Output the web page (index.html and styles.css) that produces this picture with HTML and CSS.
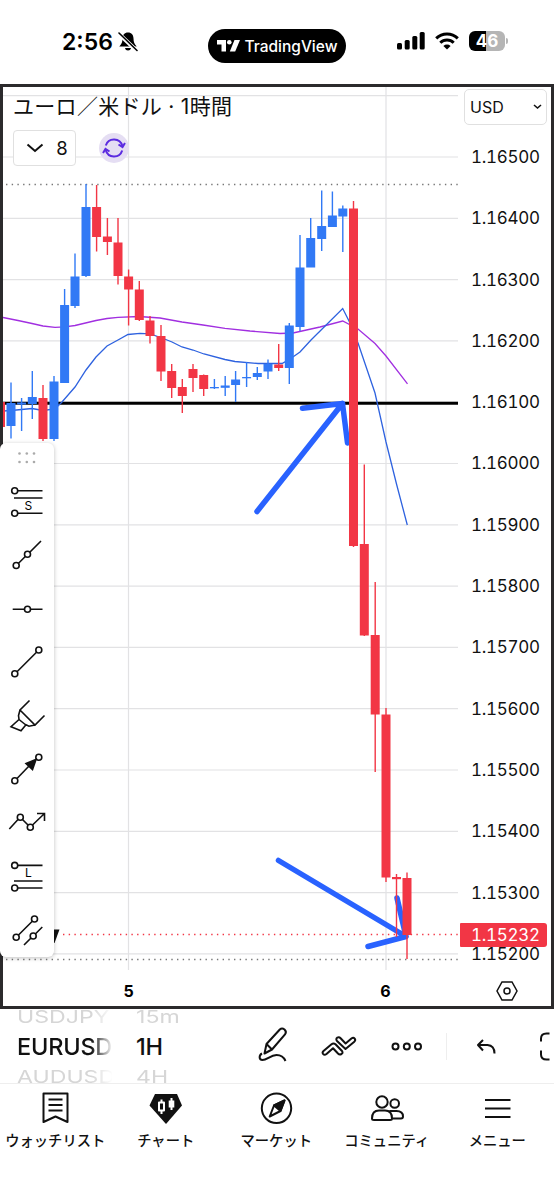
FILE: index.html
```html
<!DOCTYPE html>
<html lang="ja">
<head>
    <meta charset="utf-8">
    <title>EURUSD 1H</title>
    <link rel="stylesheet" href="styles.css">
</head>
<body>
    <header class="status">
        <div class="clock">
            <span>2:56</span>
            <svg width="20" height="22" viewBox="0 0 20 22">
                <path d="M10 1.500c-3.600 0-5.500 2.600-5.500 6 0 4-1 5.500-3.200 8h17.400c-2.200-2.500-3.200-4-3.200-8 0-3.400-1.900-6-5.500-6zM7 17h6c-.3 1.700-1.500 2.500-3 2.500s-2.700-.8-3-2.500z"/>
                <path d="M0 2l19 18" stroke="#fff" stroke-width="4"/>
                <path d="M1 2l18 17.500" stroke="#000" stroke-width="1.600" stroke-linecap="round"/>
            </svg>
        </div>
        <div class="island">
            <svg width="23" height="12" viewBox="0 0 23 12" fill="#fff">
                <path d="M0 0h9v11.500H4.500V4.500H0z"/>
                <circle cx="12.300" cy="2.300" r="2.300"/>
                <path d="M17.500 0H23l-4.800 11.500h-5.400z"/>
            </svg>
            <span>TradingView</span>
        </div>
        <div class="signals">
            <svg width="28" height="18" viewBox="0 0 28 18">
                <rect x="0" y="11" width="5" height="6.500" rx="1.500"/>
                <rect x="7.700" y="8" width="5" height="9.500" rx="1.500"/>
                <rect x="15.300" y="4" width="5" height="13.500" rx="1.500"/>
                <rect x="22.700" y="0" width="5" height="17.500" rx="1.500"/>
            </svg>
            <svg width="24" height="18" viewBox="0 0 24 18" fill="none" stroke="#000" stroke-width="3">
                <path d="M1.200 6.300a15.600 15.600 0 0 1 21.600 0M5.300 10.700a9.600 9.600 0 0 1 13.400 0"/>
                <path d="M12 17.500l-3.600-3.600a5.200 5.200 0 0 1 7.200 0z" fill="#000" stroke="none"/>
            </svg>
            <div class="power">
                <div class="battery">46</div>
                <i></i>
            </div>
        </div>
    </header>

    <main class="chart">
        <svg class="plot" id="plot" width="457" height="918" viewBox="3 87 457 918">
            <g id="grid" class="grid"></g>
            <path class="dots" d="M6 184.500H458M6 959.500H458"/>
            <path class="dots dots-red" d="M63 934.500H458"/>
            <path class="level" d="M3 403.300H458"/>
            <polyline class="ma slow" points="3,317.500 18,320.500 32,323.500 43,326 55,327.300 65,326.800 75,325.500 96,320.500 107,318.500 118,317.300 139,316.500 160,318 182,322 203,325 225,328.300 250,331 280,333.500 293,333 320,327 342.700,321 358,329 375,343.500 386,356 407.500,383.800"/>
            <polyline class="ma fast" points="3,411 11,410.500 32,408.500 43,410.500 55,409 62,402 75,387 86,370 96,357 107,346 118,340 128,334.500 140,333.300 150,333.800 162,338 172,342 182,347 193,350 204,354 225,359.500 235,361.500 258,363.500 282,363.500 290,359 300,352 311,340 342.700,308.500 349,321 358,343 375,393 386,442 396.500,484 407.300,525"/>
            <path class="arrow" d="M257 511.500L342.500 403.500M302.500 408.300L342.500 403.500L347.500 443"/>
            <path class="arrow" d="M278.500 860.500L406 936.500M368 946.500L406 936.500L397 898"/>
            <g id="candles"></g>
            <path d="M48 929.500h11.500l-5 13.500h-6z" fill="#111"/>
            <text class="day" x="128.500" y="997">5</text>
            <text class="day" x="385.500" y="997">6</text>
        </svg>

        <aside class="axis">
            <button class="currency">USD
                <svg width="9" height="6" viewBox="0 0 9 6"><path d="M1 1l3.500 3L8 1" fill="none" stroke="#111" stroke-width="1.600"/></svg>
            </button>
            <ul class="prices">
                <li>1.16500</li>
                <li>1.16400</li>
                <li>1.16300</li>
                <li>1.16200</li>
                <li>1.16100</li>
                <li>1.16000</li>
                <li>1.15900</li>
                <li>1.15800</li>
                <li>1.15700</li>
                <li>1.15600</li>
                <li>1.15500</li>
                <li>1.15400</li>
                <li>1.15300</li>
                <li>1.15200</li>
            </ul>
            <svg class="gear" width="22" height="20" viewBox="0 0 22 20" fill="none" stroke="#111" stroke-width="1.500">
                <path d="M6 1h10l5 9-5 9H6l-5-9z"/>
                <circle cx="11" cy="10" r="3"/>
            </svg>
            <div class="last">1.15232</div>
        </aside>

        <div class="legend">
            <h1>ユーロ／米ドル · 1時間</h1>
            <div class="legend-row">
                <button class="count">
                    <svg width="18" height="10" viewBox="0 0 18 10"><path d="M1.500 1.500L9 8l7.500-6.500" fill="none" stroke="#111" stroke-width="2"/></svg>
                    8
                </button>
                <span class="sync">
                    <svg width="24" height="20" viewBox="0 0 24 20" fill="none" stroke="#5b2be0" stroke-width="2">
                        <path d="M3.800 7.500a8.600 8.600 0 0 1 16.500 0.500M20.200 12.500a8.600 8.600 0 0 1-16.500-.5"/>
                        <path d="M16.500 6.500l4 2.500 2.500-4M7.500 13.500l-4-2.500L1 15"/>
                    </svg>
                </span>
            </div>
        </div>

        <div class="tools">
            <svg width="54" height="514" viewBox="0 443 54 514">
                <g class="grip">
                    <circle cx="19.500" cy="453.500" r="1.300"/><circle cx="26.800" cy="453.500" r="1.300"/><circle cx="34" cy="453.500" r="1.300"/>
                    <circle cx="19.500" cy="462" r="1.300"/><circle cx="26.800" cy="462" r="1.300"/><circle cx="34" cy="462" r="1.300"/>
                </g>
                <g class="tool">
                    <path d="M18 490.800h24.500M14 498h28.500M18 513.300h24.500"/>
                    <circle cx="14.700" cy="490.800" r="3"/><circle cx="14.700" cy="513.300" r="3"/>
                    <path d="M18.300 563.500l7-7M29.500 552.500L41 541"/>
                    <circle cx="16.200" cy="565.500" r="3"/><circle cx="27.500" cy="554.300" r="3"/>
                    <path d="M12.700 609.200h11.800M30.500 609.200h12"/>
                    <circle cx="27.500" cy="609.200" r="3"/>
                    <path d="M17 671.700L36.500 652.200"/>
                    <circle cx="14.800" cy="673.800" r="3"/><circle cx="38.800" cy="650" r="3"/>
                    <path d="M29.500 700.500L20 710l15 15 9.500-9.500M20 710l-1.500 5.500.5 4-8 7.200 10 4 5-6 3 1.500 6-1.200M19 719.500l7.500 6"/>
                    <path d="M17 778.500L30 765"/>
                    <circle cx="14.800" cy="780.800" r="3"/><circle cx="38.800" cy="757.200" r="3"/>
                    <path d="M36 759.500l-3.500 10-6.500-6z" fill="#111"/>
                    <path d="M9.300 829L18 819.500M22.500 819.500l5.500 5.500M32.500 825L44.500 813.500M37 813.500h7.500v7.500"/>
                    <circle cx="20.300" cy="817.300" r="3"/><circle cx="30.300" cy="827.200" r="3"/>
                    <path d="M18 865.400h24.500M14 881h28.500M18 888h24.500"/>
                    <circle cx="14.700" cy="865.400" r="3"/><circle cx="14.700" cy="888" r="3"/>
                    <path d="M18.500 935L32.300 921.200M24 945l7-7M35.300 934l7-7"/>
                    <circle cx="16.200" cy="937.300" r="3"/><circle cx="34.500" cy="919" r="3"/><circle cx="33.200" cy="936" r="3"/>
                </g>
                <text class="letter" x="28.300" y="510">S</text>
                <text class="letter" x="28.300" y="877.300">L</text>
            </svg>
        </div>
    </main>

    <section class="toolbar">
        <div class="wheel symbols">
            <span class="dim">USDJPY</span>
            <span class="now">EURUSD</span>
            <span class="dim">AUDUSD</span>
        </div>
        <div class="wheel times">
            <span class="dim">15m</span>
            <span class="now">1H</span>
            <span class="dim">4H</span>
        </div>
        <svg class="actions" width="298" height="74" viewBox="256 1009 298 74">
            <path d="M264.500 1053.500l2-9.500 13.300-14.500q2.200-2 4.700 0 2.500 2.300.5 4.900L272 1049.500zM266.500 1044l5.500 5.500"/>
            <path d="M262 1053.500c-3 1.500-3.500 6.500.5 6.500 4.500 0 8-5 14-5 4.500 0 7.500 2.500 9 6"/>
            <path d="M323.500 1051l8-6.800q2-1.500 4 0l6.500 6.800q1.300 2-.5 3-2 1-3.500-.5l-5-5.300-6.500 5.800q-2 1.500-3.500-.2-1-1.500.5-2.800z"/>
            <path d="M337 1041q-1.500-2.200.3-3.300 1.800-1 3.300.6l5 5.200 5.800-5q2-1.500 3.300.2 1.200 1.700-.4 3l-8.800 7.300z"/>
            <circle cx="395.500" cy="1046.500" r="3"/><circle cx="406.800" cy="1046.500" r="3"/><circle cx="418" cy="1046.500" r="3"/>
            <path d="M446.500 1033v27" stroke="#eee" stroke-width="1"/>
            <path d="M483 1040l-5 5 5 5.500M478.500 1045h9q7 .5 7 8.500"/>
            <path d="M549.500 1033.500h-3q-5.500 0-5.500 5v3M541 1050.500v4q0 5 5.500 5h3"/>
        </svg>
    </section>

    <nav class="tabs">
        <a class="tab">
            <svg width="36" height="34" viewBox="0 0 36 34"><path d="M6.500 2.500h24V31l-12-5.500L6.500 31zM11.500 8.500h14M11.500 14h14M11.500 19.500h14"/></svg>
            <span>ウォッチリスト</span>
        </a>
        <a class="tab">
            <svg width="36" height="34" viewBox="0 0 36 34">
                <path d="M7 3h22l5 11.500L18 33 1.500 14.500z" fill="#111" stroke="none"/>
                <path d="M11 11.500h5v8h-5zM13.500 8.500v3M13.500 19.500v3.500M23.500 7v12" stroke="#fff"/>
                <path d="M20.700 9.500h5.600v7h-5.600z" fill="#fff" stroke="none"/>
            </svg>
            <span>チャート</span>
        </a>
        <a class="tab">
            <svg width="36" height="34" viewBox="0 0 36 34">
                <circle cx="18.500" cy="17.300" r="14.700"/>
                <path d="M26.500 9.500L16 14.500l-4.300 11L22.500 20z"/>
                <path d="M26.500 9.500L16 14.500l6.500 5.500z" fill="#111"/>
            </svg>
            <span>マーケット</span>
        </a>
        <a class="tab">
            <svg width="36" height="34" viewBox="0 0 36 34">
                <circle cx="13" cy="11" r="5.700"/><circle cx="25.700" cy="12.500" r="4.300"/>
                <path d="M3 27.500q0-8 7-8h6q7 0 7 8 0 1.500-2 1.500H5q-2 0-2-1.500zM20.500 20h7q6.500 0 6.500 5.500 0 2-2 2h-9"/>
            </svg>
            <span>コミュニティ</span>
        </a>
        <a class="tab">
            <svg width="36" height="34" viewBox="0 0 36 34"><path d="M6 9h25.500M6 17.500h25.500M6 26h25.500"/></svg>
            <span>メニュー</span>
        </a>
    </nav>

    <script src="chart.js"></script>
</body>
</html>
```
FILE: styles.css
```css
* {
    box-sizing: border-box;
}

body {
    margin: 0;
    width: 554px;
    height: 1200px;
    overflow: hidden;
    background-color: #fff;
    color: #111;
    font-family: Inter, "Noto Sans CJK JP", sans-serif;
}

button {
    font: inherit;
    color: inherit;
    background-color: #fff;
    border: 1px solid #e0e0e0;
    border-radius: 4px;
    padding: 0;
}

svg {
    display: block;
    flex: none;
}

/* status bar */
.status {
    height: 84px;
    display: flex;
    align-items: flex-start;
}

.clock {
    width: 208px;
    padding: 29px 0 0 62px;
    display: flex;
    gap: 5px;
    font-size: 23px;
    font-weight: 600;
    line-height: 26px;
    color: #000;
}

.clock svg {
    margin-top: 2px;
}

.island {
    width: 138px;
    height: 34px;
    margin-top: 29px;
    border-radius: 17px;
    background-color: #000;
    color: #fff;
    display: flex;
    align-items: center;
    justify-content: center;
    gap: 5px;
    font-size: 15.5px;
    font-weight: 500;
}

.signals {
    margin: 31px 0 0 51px;
    display: flex;
    align-items: center;
    gap: 10px;
}

.power {
    display: flex;
    align-items: center;
    gap: 1px;
}

.power i {
    width: 2px;
    height: 6px;
    border-radius: 0 2px 2px 0;
    background-color: #b5b5b5;
}

.battery {
    width: 36px;
    height: 20px;
    border-radius: 6px;
    background: linear-gradient(90deg, #000 17px, #b5b5b5 17px);
    color: #fff;
    font-size: 17px;
    font-weight: 700;
    line-height: 20px;
    text-align: center;
}

/* chart */
.chart {
    position: relative;
    height: 925px;
    border: 3px solid #2b2a2c;
    display: flex;
}

.grid {
    stroke: #e2e2e4;
    stroke-width: 1.2;
}

.dots {
    stroke: #777;
    stroke-width: 1.5;
    stroke-dasharray: 1.4 4.3;
}

.dots-red {
    stroke: #f23645;
}

.level {
    stroke: #000;
    stroke-width: 3;
}

.ma {
    fill: none;
    stroke-width: 1.3;
}

.slow {
    stroke: #a12fe0;
}

.fast {
    stroke: #2e62df;
}

.arrow {
    fill: none;
    stroke: #2962ff;
    stroke-width: 5.5;
    stroke-linecap: round;
    stroke-linejoin: round;
}

.up {
    fill: #3179f5;
}

.down {
    fill: #f23645;
}

.day {
    font-size: 16px;
    font-weight: 700;
    text-anchor: middle;
}

.axis {
    width: 91px;
    position: relative;
    display: flex;
    flex-direction: column;
    font-variant-numeric: tabular-nums;
}

.currency {
    width: 83px;
    height: 36px;
    margin: 2px 0 0 4px;
    padding: 0 4px 0 5px;
    display: flex;
    align-items: center;
    justify-content: space-between;
    font-size: 16px;
    border-radius: 5px;
}

.prices {
    list-style: none;
    margin: 2px 0 0;
    padding: 0;
    font-size: 17px;
    letter-spacing: -0.3px;
}

.prices li {
    height: 61.3px;
    line-height: 61.3px;
    padding-left: 11px;
}

.gear {
    margin: -4px 0 0 36px;
}

.last {
    position: absolute;
    top: 836px;
    left: 0;
    width: 87px;
    height: 24px;
    padding-left: 11px;
    border-radius: 1px 3px 3px 1px;
    background-color: #f23645;
    color: #fff;
    font-size: 17px;
    letter-spacing: -0.3px;
    line-height: 24px;
}

.legend {
    position: absolute;
    top: 7px;
    left: 10px;
}

.legend h1 {
    margin: 0;
    font-size: 21px;
    font-weight: 400;
    line-height: 26px;
    letter-spacing: 0.3px;
    white-space: nowrap;
}

.legend-row {
    display: flex;
    gap: 23px;
    margin-top: 10px;
}

.count {
    width: 63px;
    height: 36px;
    padding-left: 5px;
    display: flex;
    align-items: center;
    justify-content: center;
    gap: 12px;
    font-size: 18.5px;
}

.sync {
    width: 30px;
    height: 30px;
    margin-top: 3px;
    border-radius: 50%;
    background-color: #e5def3;
    display: flex;
    align-items: center;
    justify-content: center;
}

.tools {
    position: absolute;
    top: 356px;
    left: -3px;
    width: 54px;
    height: 514px;
    border-radius: 6px;
    background-color: #fff;
    box-shadow: 0 1px 4px rgba(0, 0, 0, 0.25);
}

.grip {
    fill: #aaa;
}

.tool {
    fill: none;
    stroke: #111;
    stroke-width: 1.6;
}

.letter {
    font-size: 12px;
    text-anchor: middle;
}

/* symbol wheel and drawing actions */
.toolbar {
    height: 75px;
    display: flex;
    border-bottom: 1px solid #eee;
}

.wheel {
    display: flex;
    flex-direction: column;
    white-space: nowrap;
}

.symbols {
    width: 95px;
    margin-left: 17px;
    -webkit-mask-image: linear-gradient(90deg, #000 74px, transparent 96px);
    mask-image: linear-gradient(90deg, #000 74px, transparent 96px);
}

.times {
    width: 120px;
    margin-left: 24px;
}

.wheel .now {
    font-size: 23.5px;
    font-weight: 500;
    line-height: 44px;
    letter-spacing: -0.2px;
}

.wheel .dim {
    font-size: 17px;
    line-height: 16px;
    color: #d6d6d6;
    transform: scaleX(1.36);
    transform-origin: 0 50%;
}

/* bottom navigation */
.tabs {
    height: 116px;
    padding-top: 7px;
    display: grid;
    grid-template-columns: repeat(5, 110.5px);
}

.tab {
    display: flex;
    flex-direction: column;
    align-items: center;
    gap: 6px;
    font-size: 14.3px;
    font-weight: 500;
    line-height: 20px;
    white-space: nowrap;
}

.tab svg,
.actions {
    fill: none;
    stroke: #111;
    stroke-width: 2;
    stroke-linejoin: round;
}
```
FILE: chart.js
```js
// x, body top, body bottom, wick top, wick bottom, direction
const candles = [
    [0.5, 402, 427, 402, 427, 'down'],
    [11, 403, 426, 382.5, 438.5, 'up'],
    [21.6, 402.5, 404.5, 398, 431, 'up'],
    [32.3, 397, 404, 371, 419, 'up'],
    [43, 398, 439, 385, 441, 'down'],
    [54, 381.5, 439, 376, 441, 'up'],
    [64.6, 305, 383, 289, 383, 'up'],
    [75, 276.5, 306, 253.5, 308, 'up'],
    [86, 207, 276, 184, 277, 'up'],
    [96.6, 207, 237, 185, 251.5, 'down'],
    [107.4, 236.5, 242, 218, 255, 'down'],
    [118, 242.5, 276, 218, 284.5, 'down'],
    [128.6, 276.5, 289.5, 269.5, 325.5, 'down'],
    [139.3, 289.5, 320, 281, 321, 'down'],
    [150, 320.5, 336, 316, 343.5, 'down'],
    [161, 336, 371.5, 325, 381, 'down'],
    [171.7, 371, 388, 364, 398, 'down'],
    [182.3, 387, 396, 379, 413, 'down'],
    [193, 369, 378, 364, 392, 'down'],
    [203.7, 375, 389, 374.5, 396, 'down'],
    [214.4, 387, 388.3, 379, 389, 'up'],
    [225.2, 385.5, 387.8, 376, 396, 'up'],
    [235.6, 379.5, 385, 371, 402, 'up'],
    [246.6, 377, 378.3, 362, 387, 'up'],
    [257.3, 373, 377, 367, 380, 'up'],
    [268, 364, 371.5, 359.5, 379, 'up'],
    [278.7, 364.5, 368, 344, 371, 'down'],
    [289.3, 325.5, 368, 323, 384, 'up'],
    [300, 267.5, 327, 235, 331, 'up'],
    [310.7, 238, 267.5, 218, 267, 'up'],
    [321.7, 226, 239, 190.5, 251, 'up'],
    [332.4, 215.5, 227, 191.5, 227, 'up'],
    [342.8, 208.5, 216.5, 205.5, 252, 'up'],
    [353.5, 208.5, 546, 201, 547, 'down'],
    [364.3, 544, 635.5, 464.5, 636, 'down'],
    [375.2, 635, 714.5, 582, 772, 'down'],
    [386, 714.5, 877.5, 708, 882, 'down'],
    [396.5, 877, 879.2, 874, 937, 'down'],
    [407, 878, 935, 872.5, 959, 'down']
];

let grid = '<path d="M128.500 87V970M386 87V970"/>';
for (let i = -1; i < 14; i++) {
    let y = 157 + i * 61.3;
    grid += `<path d="M3 ${y}H458"/>`;
}
document.getElementById('grid').innerHTML = grid;

document.getElementById('candles').innerHTML = candles.map(([x, top, bottom, high, low, dir]) =>
    `<g class="${dir}">
        <rect x="${x - 0.7}" y="${high}" width="1.4" height="${low - high}"/>
        <rect x="${x - 4.5}" y="${top}" width="9" height="${bottom - top}"/>
    </g>`
).join('');
```
